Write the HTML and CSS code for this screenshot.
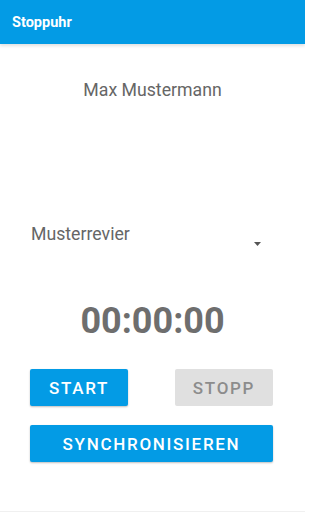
FILE: index.html
```html
<!DOCTYPE html>
<html lang="de">
<head>
<meta charset="utf-8">
<title>Stoppuhr</title>
<link rel="stylesheet" href="styles.css">
</head>
<body>
<div class="app">
  <header class="appbar"><span class="appbar-title">Stoppuhr</span></header>
  <main class="content">
    <div class="user">Max Mustermann</div>
    <div class="spinner">
      <span class="spinner-text">Musterrevier</span>
      <svg class="spinner-arrow" width="7" height="4" viewBox="0 0 7 4"><path d="M0 0H7L3.5 4Z" fill="#555"/></svg>
    </div>
    <div class="timer">00:00:00</div>
    <div class="actions">
      <div class="action-row">
        <button class="btn btn-primary">START</button>
        <button class="btn btn-disabled">STOPP</button>
      </div>
      <button class="btn btn-primary btn-wide">SYNCHRONISIEREN</button>
    </div>
  </main>
</div>
</body>
</html>
```
FILE: styles.css
```css
html, body {
  margin: 0;
  padding: 0;
  background: #ffffff;
}
body {
  font-family: Roboto, "Liberation Sans", sans-serif;
  width: 305px;
  height: 512px;
  overflow: hidden;
}
.app {
  height: 511px;
  border-bottom: 1px solid #f0f0f0;
  display: flex;
  flex-direction: column;
}
.appbar {
  height: 44px;
  background: #039be5;
  box-shadow: 0 2px 3px rgba(0, 0, 0, 0.12);
  display: flex;
  align-items: flex-start;
  padding-left: 12px;
  box-sizing: border-box;
  position: relative;
  z-index: 1;
}
.appbar-title {
  color: #ffffff;
  font-size: 14.5px;
  font-weight: 700;
  line-height: 20px;
  margin-top: 13px;
}
.content {
  display: flex;
  flex-direction: column;
}
.user {
  margin-top: 36px;
  text-align: center;
  font-size: 17.7px;
  line-height: 20px;
  color: #666666;
}
.spinner {
  margin-top: 123.5px;
  height: 24px;
  display: flex;
  justify-content: space-between;
  padding: 0 44px 0 31px;
}
.spinner-text {
  font-size: 17.7px;
  line-height: 20px;
  color: #666666;
  align-self: flex-start;
}
.spinner-arrow {
  align-self: flex-end;
  margin-bottom: 1.5px;
}
.timer {
  margin-top: 52px;
  text-align: center;
  font-size: 36px;
  font-weight: 700;
  line-height: 42px;
  color: #6e6e6e;
}
.actions {
  margin-top: 27.5px;
  padding-left: 30px;
  width: 243px;
  display: flex;
  flex-direction: column;
  gap: 19px;
}
.action-row {
  display: flex;
  justify-content: space-between;
}
.btn {
  border: none;
  margin: 0;
  height: 37px;
  width: 98px;
  box-sizing: border-box;
  padding: 2px 0 0 0;
  line-height: 35px;
  font-family: Roboto, "Liberation Sans", sans-serif;
  font-size: 17px;
  font-weight: 500;
  letter-spacing: 1.7px;
  border-radius: 2px;
  text-align: center;
}
.btn-primary {
  background: #039be5;
  color: #ffffff;
  box-shadow: 0 1px 2px rgba(0, 0, 0, 0.25);
}
.btn-disabled {
  background: #e0e0e0;
  color: #8c8c8c;
}
.btn-wide {
  width: 243px;
}
```
